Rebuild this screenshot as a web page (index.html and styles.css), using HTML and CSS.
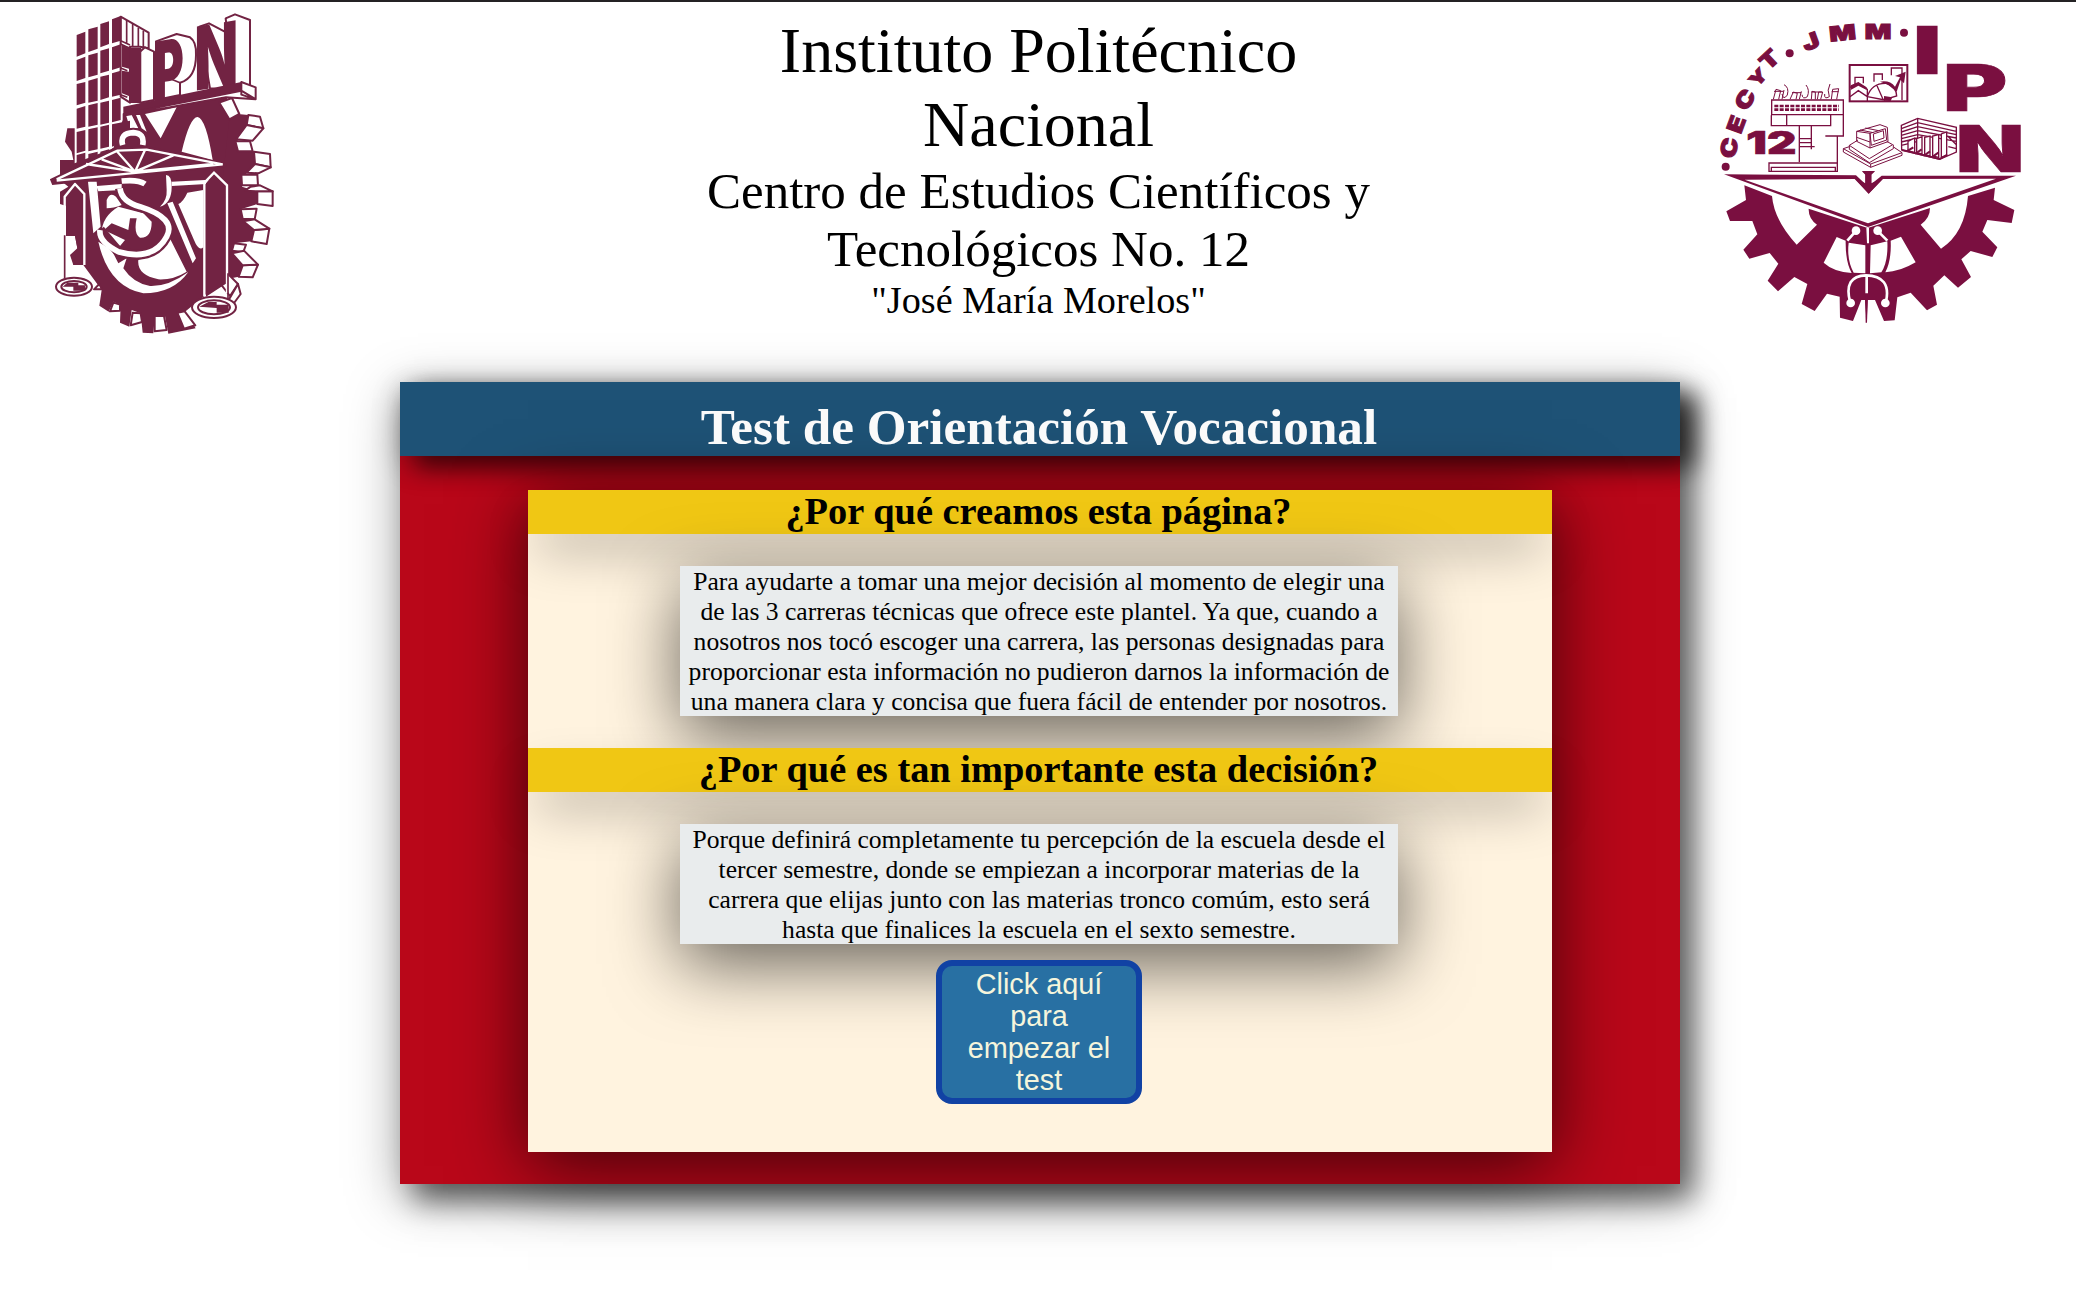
FILE: index.html
```html
<!DOCTYPE html>
<html lang="es">
<head>
<meta charset="utf-8">
<title>Test de Orientación Vocacional</title>
<link rel="stylesheet" href="styles.css">
</head>
<body>
<header class="top">
  <svg class="logo-ipn" viewBox="18 0 792 1035" role="img" aria-label="IPN">
    <!-- gear body -->
    <path class="d" d="M280 340L590 290L600 350L620 370L615 420L625 450L635 520L635 560L630 630L640 660L610 735L600 770L565 830L560 850L520 890L465 935L497 985L415 1001L405 948L375 945L370 1000L338 998L332 940L305 930L298 980L270 968L272 915L250 905L236 935L208 917L215 870L160 795L130 795L120 765L142 745L135 708L108 708L108 680L122 670L120 622L90 612L90 575L115 560L90 540L90 480L130 480L125 455L105 425L112 385L140 385Z"/>
    <path class="d" d="M600 340L655 345L650 375L618 418L672 455L675 492L650 518L636 560L682 574V612L632 628L672 690L664 724L612 730L638 796L626 830L566 842L560 700Z"/>
    <!-- gear teeth -->
    <g class="o">
      <path d="M568 308L606 294L628 342L598 358Z"/>
      <path d="M655 345L690 350L700 385L650 375Z"/><path d="M650 375L700 385L668 422L618 418Z"/>
      <path d="M616 424L660 424L668 454L624 454Z"/>
      <path d="M672 455L720 462L722 502L675 492Z"/><path d="M675 492L722 502L685 520L650 518Z"/>
      <path d="M634 524L682 524L684 556L636 556Z"/>
      <path d="M682 574H728V618L682 612Z"/><path d="M645 572L662 560L690 556L728 574H682Z"/>
      <path d="M632 628L680 626L674 658L638 656Z"/>
      <path d="M672 690L718 686L710 732L664 724Z"/><path d="M640 664L674 658L718 686L672 690Z"/>
      <path d="M612 730L648 734L640 756L606 752Z"/>
      <path d="M638 796L684 794L668 832L626 830Z"/><path d="M606 760L642 752L684 794L638 796Z"/>
      <path d="M564 842L590 818L624 852L600 888Z"/><path d="M624 852L632 882L610 912L596 900Z"/>
      <path d="M374 948L402 948L410 990L374 994Z"/><path d="M442 938L464 934L496 976L462 986Z"/>
      <path d="M308 938L332 940L336 966L302 976Z"/><path d="M250 908L270 914V932L240 934Z"/>
      <path d="M192 868L208 852L216 868Z"/>
    </g>
    <!-- inner openings -->
    <path class="w" d="M345 342L440 322L392 415ZM288 345L305 345L325 385L300 385ZM318 345L330 345L350 395L335 385ZM455 455Q480 350 503 351Q528 356 548 480L455 455ZM472 578L520 570L520 742Q506 755 492 720L445 612Q460 605 472 578ZM174 545L200 545L212 680L190 700ZM200 558L275 552L275 570L205 574ZM425 545L568 538L568 550L425 558ZM412 610L428 605L498 775L488 790ZM230 600Q240 575 258 590L275 615Q250 625 230 625ZM205 725Q235 860 340 880Q430 880 475 816Q415 860 360 858Q310 850 280 805L290 775L265 790L245 750ZM325 780Q385 770 412 700L470 815Q430 840 385 838Q320 825 325 780ZM265 620L340 640L365 665Q365 715 330 713Q310 700 320 655L300 655L295 690L245 670L222 690L285 720L270 738L215 700Q215 650 265 620Z"/>
    <path class="w" d="M408 525Q425 525 425 560Q425 610 390 620Q412 600 410 570Z"/>
    <!-- tower -->
    <path class="d" d="M140 105L166 95L166 160L140 170ZM175 88L203 80L203 146L175 156ZM211 72L237 64L237 132L211 142ZM246 58L272 48L272 122L246 130ZM140 180L166 170L166 234L140 243ZM175 166L203 158L203 224L175 232ZM211 152L237 145L237 212L211 220ZM246 142L272 133L272 202L246 210ZM140 252L166 246L166 308L140 316ZM175 242L203 234L203 302L175 308ZM211 230L237 224L237 292L211 300ZM246 220L272 212L272 284L246 290Z"/>
    <path class="w" d="M134 322L278 290V360L250 445L134 490Z"/>
    <path class="d" d="M140 326L166 318V380L140 386ZM175 316L203 309V374L175 380ZM211 308L237 302V368L211 374ZM246 300L272 293V360L246 367ZM140 396L166 390V452L140 460ZM175 388L203 382V448L175 454ZM211 380L237 374V440L211 446ZM246 373L300 362V420L246 440ZM140 465L166 458V490L140 500ZM175 462L203 455V520H175ZM211 455L237 448V520H211ZM246 445H262V510H246Z"/>
    <path class="o" d="M272 50L356 98V145L330 140L300 140L300 308L272 290Z"/>
    <path class="l" d="M272 50V122L300 135M290 60V128M308 72V138M325 84V140M340 92V143M272 132L292 142M272 204L292 212M272 284L292 292"/>
    <path class="d" d="M276 135L302 142V208L276 200ZM276 212L302 216V290L276 280Z"/>
    <!-- extruded letters -->
    <path class="o" d="M330 155L345 142L372 155V300L330 308ZM378 124L440 102L480 112Q500 125 498 165Q498 235 450 248V285L378 300ZM508 80L537 70L590 98V270L540 265ZM587 55L615 43L660 60V260L613 270Z"/>
    <path class="l" d="M450 248L410 232M450 248V285"/>
    <g class="t">
      <text transform="matrix(1 -.16 0 1 371 304)" font-size="245" textLength="90" lengthAdjust="spacingAndGlyphs">P</text>
      <text transform="matrix(1 -.16 0 1 493 273)" font-size="264" textLength="132" lengthAdjust="spacingAndGlyphs">N</text>
      <text transform="matrix(1 0 0 1 290 310)" font-size="228" textLength="52" lengthAdjust="spacingAndGlyphs">I</text>
    </g>
    <path class="d" d="M280 320L634 246L634 272L280 342Z"/>
    <path class="o" d="M634 246L677 262V298L634 284ZM282 342L634 272L677 298L588 292L290 345Z"/>
    <!-- balance posts and pans -->
    <path class="d" d="M108 590L135 555L163 585V795L130 795L142 745L135 708H108ZM528 550L552 520L590 560V850L528 890Z"/>
    <path class="ws" d="M104 710V590L135 552L163 582V795M523 888V548L552 518L591 556V880"/>
    <path class="l" d="M104 706V835M594 820V945"/>
    <g class="pan">
      <ellipse cx="132" cy="860" rx="54" ry="27"/><ellipse cx="132" cy="860" rx="38" ry="17"/>
      <ellipse cx="552" cy="922" rx="66" ry="32"/><ellipse cx="552" cy="922" rx="48" ry="21"/>
    </g>
    <path class="d" d="M98 860L112 848H145V856H165V872H130V860ZM508 920L535 906H560V914H596V938H560V924Z"/>
    <!-- truss -->
    <path class="truss" d="M66 540L262 446L350 443L590 495L70 550Z"/>
    <path class="ws" d="M80 538L262 452L350 449L578 493L80 542M315 515L168 492M315 515L215 478M315 515L262 455M315 515L345 450M315 515L430 466M315 515L550 492"/>
    <!-- snake -->
    <path class="sb" d="M278 435Q268 400 310 398Q345 400 338 435"/>
    <path class="sb" d="M270 565Q275 605 330 620Q440 655 410 710Q370 785 265 755M265 755L210 690M290 543Q330 540 340 560"/>
    <path class="sw" d="M278 435Q268 400 310 398Q345 400 338 435M270 565Q275 605 330 620Q440 655 410 710Q370 785 265 755Q205 725 210 690M275 543Q325 538 345 552"/>
  </svg>

  <div class="titles">
    <p class="t1">Instituto Politécnico<br>Nacional</p>
    <p class="t2">Centro de Estudios Científicos y<br>Tecnológicos No. 12</p>
    <p class="t3">"José María Morelos"</p>
  </div>

  <svg class="logo-cecyt" viewBox="0 0 1020 1020" role="img" aria-label="CECyT 12">
    <!-- arc lettering -->
    <g class="arc" text-anchor="middle">
      <circle cx="77" cy="500" r="12"/><circle cx="269" cy="160" r="12"/><circle cx="612" cy="98" r="12"/>
      <text transform="translate(110 447) rotate(-80) scale(1.3 1.05)">C</text>
      <text transform="translate(131 381) rotate(-70) scale(1.3 1.05)">E</text>
      <text transform="translate(155 311) rotate(-58) scale(1.3 1.05)">C</text>
      <text transform="translate(188 245) rotate(-47) scale(1.15 .85)">Y</text>
      <text transform="translate(224 196) rotate(-43) scale(1.3 1.05)">T</text>
      <text transform="translate(340 146) rotate(-20) scale(1.35 1.05)">J</text>
      <text transform="translate(430 121) rotate(-6) scale(1.35 1)">M</text>
      <text transform="translate(534 116) scale(1.35 1)">M</text>
    </g>
    <g class="big">
      <text x="638" y="221" font-size="197" textLength="87" lengthAdjust="spacingAndGlyphs">I</text>
      <text x="728" y="334" font-size="193" textLength="194" lengthAdjust="spacingAndGlyphs">P</text>
      <text x="767" y="517" font-size="193" textLength="206" lengthAdjust="spacingAndGlyphs">N</text>
      <text x="139" y="463" font-size="92" textLength="150" lengthAdjust="spacingAndGlyphs">12</text>
    </g>
    <!-- chart -->
    <rect class="s5" x="449" y="195" width="173" height="109"/>
    <path class="s4" d="M465 252V232H490V250M522 245V222H547V240M574 226V204H606V300M450 262L475 250L502 268V303M450 290L475 272L502 290M502 290Q515 248 560 250Q590 262 590 288L550 300L530 255M502 290L555 300"/>
    <path class="d" d="M540 245Q570 240 585 260L600 232L585 228L617 215L612 250L602 240L590 275L565 255ZM552 288L577 292L572 303L552 302ZM452 256L475 246L500 262V270L475 257L452 270Z"/>
    <!-- register -->
    <path class="s4" d="M215 300H430V344H215ZM214 346V377H392V346M260 346V377M430 344V408H376M298 378V486M334 378V448M298 416H334M298 428H334M298 440H344M412 410V488M207 489H412V514H207ZM214 514V502H406V514"/>
    <path class="s3" d="M220 298L228 268L242 272L236 298M246 298L252 270M252 254Q268 262 262 285Q250 302 246 282M270 298L280 276L292 280L288 298M298 298L304 274M318 255Q330 270 322 290Q308 300 306 284M334 298L336 274L346 276V298M352 298L356 276H368L362 298M390 252Q380 270 388 290Q372 300 374 282M394 298L398 268L416 266L410 298M222 274H250M276 278H304M334 276H366M395 275H416"/>
    <path class="keys" d="M223 318H417M223 329H417"/>
    <!-- computer -->
    <path class="s3" d="M470 394L540 374L562 382L564 425L510 444L470 424ZM510 400L556 386L560 420L514 436ZM520 402L550 392L552 414L522 424ZM470 394L510 400V444M480 390L520 398M496 384L536 392M470 412L510 426M448 436L474 420M448 436L508 476L578 434L560 424M448 436V448L508 488L580 446V434M430 446L448 440M430 446L512 492L606 458L582 442M430 446V456L512 502L606 466V458M512 492V502"/>
    <!-- building -->
    <path class="s4" d="M604 376L653 355L769 382V456L719 478L605 450ZM653 355V420M604 386L653 368L769 394M604 396L653 380L769 404M604 406L653 392L769 414M604 416L653 404L769 424M604 426L653 414M604 436L653 424M745 410L769 434M745 440L769 446"/>
    <path class="bars" d="M624 452V424L644 414V458ZM650 458V416L666 410V462ZM674 464V412L690 408V468ZM698 468V408L716 404V472ZM724 472V402L740 396V466Z"/>
    <path class="s5" d="M606 450L719 477L742 464M620 454L640 442M645 462L665 448M670 468L690 454M695 472L715 458"/>
    <!-- open book -->
    <path class="d" fill-rule="evenodd" d="M72 523L468 526L496 552V524L486 514H525L514 524V552L545 527H948L504 681ZM134 539L504 670L888 536L549 537L506 581L464 537Z"/>
    <path class="d" d="M464 535L496 550V522L486 513H525L514 522V550L549 535L506 581Z"/>
    <!-- half gear -->
    <path class="d" d="M133 556L216 588Q222 660 290 734L351 674Q325 655 326 626L503 684L690 624Q690 655 662 674L723 746Q795 700 804 588L885 563L881 600L943 630L935 669L862 660L847 695L892 742L877 771L812 753L784 778L813 831L774 863L733 826L700 857L711 914L681 931L632 878L592 892L584 961L552 963L525 900H503L500 968L495 900H484L459 963L420 953L419 890L381 881L344 933L305 912L322 852L283 831L234 874L203 842L235 791L209 759L148 776L130 749L172 703L157 663H90L79 634L138 600Z"/>
    <path class="w" d="M410 711L437 722Q436 785 455 819Q400 815 371 788ZM446 728L496 736V820L461 818Q440 780 446 728ZM512 736L562 724Q565 785 544 817L510 820ZM572 722L603 710L647 787Q600 815 556 817Q575 780 572 722ZM499 684H507V730H501Z"/>
    <path class="ws" d="M442 722L466 695M562 722L535 695M450 905Q430 828 498 826Q575 828 558 905M500 828V882"/>
    <path class="d" d="M495 880H504L501 968H497Z"/>
    <circle class="w" cx="468" cy="692" r="13"/><circle class="w" cx="533" cy="692" r="13"/>
    <circle class="w" cx="452" cy="909" r="13"/><circle class="w" cx="556" cy="909" r="13"/>
  </svg>
</header>

<main class="card">
  <h1>Test de Orientación Vocacional</h1>
  <section class="panel">
    <h2>¿Por qué creamos esta página?</h2>
    <p class="box">Para ayudarte a tomar una mejor decisión al momento de elegir una<br>de las 3 carreras técnicas que ofrece este plantel. Ya que, cuando a<br>nosotros nos tocó escoger una carrera, las personas designadas para<br>proporcionar esta información no pudieron darnos la información de<br>una manera clara y concisa que fuera fácil de entender por nosotros.</p>
    <h2>¿Por qué es tan importante esta decisión?</h2>
    <p class="box last">Porque definirá completamente tu percepción de la escuela desde el<br>tercer semestre, donde se empiezan a incorporar materias de la<br>carrera que elijas junto con las materias tronco comúm, esto será<br>hasta que finalices la escuela en el sexto semestre.</p>
    <button class="start" type="button">Click aquí<br>para<br>empezar el<br>test</button>
  </section>
</main>
</body>
</html>
```
FILE: styles.css
```css
* { box-sizing: border-box; }
body {
  margin: 0;
  min-height: 1294px;
  border-top: 2px solid #242224;
  background: #fff;
  color: #000;
  font-family: "Liberation Serif", "Times New Roman", serif;
}
h1, h2, p { margin: 0; }

.top {
  display: grid;
  grid-template-columns: 1fr 800px 1fr;
  height: 380px;
  padding: 0 36px;
  text-align: center;
}
.top svg { margin-top: -2px; }
.logo-ipn { width: 264px; height: 345px; }
.logo-cecyt { width: 340px; height: 340px; justify-self: end; }
.titles { padding: 12px 0 0 1px; white-space: nowrap; }
.t1 { font-size: 64px; line-height: 74px; }
.t2 { font-size: 51px; line-height: 58px; }
.t3 { font-size: 38.2px; line-height: 44px; }

.logo-ipn { fill: #722343; stroke: none; }
.logo-ipn .o { fill: #fff; stroke: #722343; stroke-width: 6; stroke-linejoin: round; }
.logo-ipn .l { fill: none; stroke: #722343; stroke-width: 5; }
.logo-ipn .t { font-family: Inter, "Liberation Sans", sans-serif; font-weight: 900; }
.logo-ipn .truss { stroke: #722343; stroke-width: 10; }
.logo-ipn .pan { fill: #fff; stroke: #722343; stroke-width: 6; }
.logo-ipn .ws { fill: none; stroke: #fff; stroke-width: 7; }
.sb { fill: none; stroke: #722343; stroke-width: 30; }
.sw { fill: none; stroke: #fff; stroke-width: 17; }
.w { fill: #fff; }

.logo-cecyt { fill: #7a0f40; }
.logo-cecyt .ws { fill: none; stroke: #fff; stroke-width: 8; }
.arc text { font: 900 62px Inter, "Liberation Sans", sans-serif; stroke: #7a0f40; stroke-width: 3; }
.big text { font-family: Inter, "Liberation Sans", sans-serif; font-weight: 900; stroke: #7a0f40; stroke-width: 2; }
.s3, .s4, .s5 { fill: none; stroke: #7a0f40; stroke-width: 3; }
.s4 { stroke-width: 4; }
.s5 { stroke-width: 6; }
.keys { fill: none; stroke: #7a0f40; stroke-width: 8; stroke-dasharray: 12 4; }
.bars { fill: #fff; stroke: #7a0f40; stroke-width: 4; }

.card {
  width: 1280px;
  height: 802px;
  margin-left: 400px;
  background: #b90719;
  text-align: center;
  box-shadow: 14px 16px 28px rgba(0, 0, 0, .55), 0 12px 50px rgba(0, 0, 0, .35);
}
.card h1 {
  height: 74px;
  padding: 16px 2px 0 0;
  background: #1e5276;
  color: #fafafa;
  font-size: 51.2px;
  line-height: 58px;
  box-shadow: 16px 12px 24px rgba(0, 0, 0, .6), 0 6px 30px rgba(0, 0, 0, .2);
}
.panel {
  width: 1024px;
  height: 662px;
  margin: 34px auto 0;
  background: #fff3df;
  box-shadow: 0 14px 70px rgba(0, 0, 0, .66);
}
.panel h2 {
  height: 44px;
  padding-right: 3px;
  background: #f0c714;
  font-size: 38.4px;
  line-height: 42px;
  box-shadow: 0 24px 50px -10px rgba(0, 0, 0, .35);
}
.box {
  width: 718px;
  height: 150px;
  margin: 32px 0 32px 152px;
  padding-top: 1px;
  background: #e9eced;
  font-size: 25.6px;
  line-height: 30px;
  white-space: nowrap;
  box-shadow: 0 20px 70px rgba(0, 0, 0, .6);
}
.box.last { height: 120px; margin-bottom: 16px; }
.start {
  display: block;
  width: 206px;
  height: 144px;
  margin-left: 408px;
  padding: 2px 0;
  border: 6px solid #1142a4;
  border-radius: 16px;
  background: #2870a3;
  color: beige;
  font: 28.8px/32px "Liberation Sans", Arial, sans-serif;
}
```
